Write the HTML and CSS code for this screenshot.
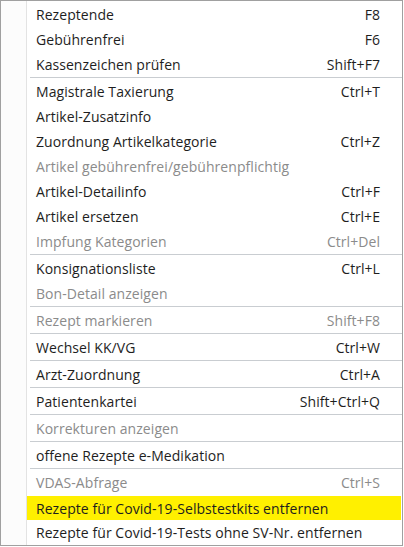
FILE: index.html
```html
<!DOCTYPE html>
<html lang="de">
<head>
<meta charset="utf-8">
<title>Menü</title>
<link rel="stylesheet" href="styles.css">
</head>
<body>
<div class="menu">
  <div class="gutter"></div>
  <div class="items">
    <div class="item"><span class="label">Rezeptende</span><span class="key">F8</span></div>
    <div class="item"><span class="label">Gebührenfrei</span><span class="key">F6</span></div>
    <div class="item"><span class="label">Kassenzeichen prüfen</span><span class="key">Shift+F7</span></div>
    <div class="sep"></div>
    <div class="item"><span class="label">Magistrale Taxierung</span><span class="key">Ctrl+T</span></div>
    <div class="item"><span class="label">Artikel-Zusatzinfo</span><span class="key"></span></div>
    <div class="item"><span class="label">Zuordnung Artikelkategorie</span><span class="key">Ctrl+Z</span></div>
    <div class="item disabled"><span class="label">Artikel gebührenfrei/gebührenpflichtig</span><span class="key"></span></div>
    <div class="item"><span class="label">Artikel-Detailinfo</span><span class="key">Ctrl+F</span></div>
    <div class="item"><span class="label">Artikel ersetzen</span><span class="key">Ctrl+E</span></div>
    <div class="item disabled"><span class="label">Impfung Kategorien</span><span class="key">Ctrl+Del</span></div>
    <div class="sep"></div>
    <div class="item"><span class="label">Konsignationsliste</span><span class="key">Ctrl+L</span></div>
    <div class="item disabled"><span class="label">Bon-Detail anzeigen</span><span class="key"></span></div>
    <div class="sep"></div>
    <div class="item disabled"><span class="label">Rezept markieren</span><span class="key">Shift+F8</span></div>
    <div class="sep"></div>
    <div class="item"><span class="label">Wechsel KK/VG</span><span class="key">Ctrl+W</span></div>
    <div class="sep"></div>
    <div class="item"><span class="label">Arzt-Zuordnung</span><span class="key">Ctrl+A</span></div>
    <div class="sep"></div>
    <div class="item"><span class="label">Patientenkartei</span><span class="key">Shift+Ctrl+Q</span></div>
    <div class="sep"></div>
    <div class="item disabled"><span class="label">Korrekturen anzeigen</span><span class="key"></span></div>
    <div class="sep"></div>
    <div class="item"><span class="label">offene Rezepte e-Medikation</span><span class="key"></span></div>
    <div class="sep"></div>
    <div class="item disabled"><span class="label">VDAS-Abfrage</span><span class="key">Ctrl+S</span></div>
    <div class="item highlight"><span class="label">Rezepte für Covid-19-Selbstestkits entfernen</span><span class="key"></span></div>
    <div class="item"><span class="label">Rezepte für Covid-19-Tests ohne SV-Nr. entfernen</span><span class="key"></span></div>
  </div>
</div>
</body>
</html>
```

FILE: styles.css
```css
html, body {
  margin: 0;
  padding: 0;
  background: #ffffff;
}

.menu {
  display: flex;
  width: 403px;
  box-sizing: border-box;
  border: 1px solid #a0a0a0;
  background: #ffffff;
  font-family: "Open Sans", "Noto Sans", sans-serif;
  font-size: 14px;
  letter-spacing: 0.06px;
  color: #1e1e1e;
}

.gutter {
  width: 25px;
  flex: none;
  background: #fcfcfc;
  border-right: 1px solid #e3e3e3;
}

.items {
  flex: 1;
  display: flex;
  flex-direction: column;
  padding-top: 1px;
}

.item {
  height: 25px;
  display: flex;
  align-items: center;
  justify-content: space-between;
  padding: 0 22px 0 9px;
  white-space: nowrap;
}

.item.disabled {
  color: #8b8b8b;
}

.item.highlight {
  background: #fff000;
  height: 24px;
  margin-top: 1px;
  margin-right: 1px;
}

.sep {
  height: 1px;
  margin: 0 0 1px 3px;
  background: #c9cdd1;
}
```
